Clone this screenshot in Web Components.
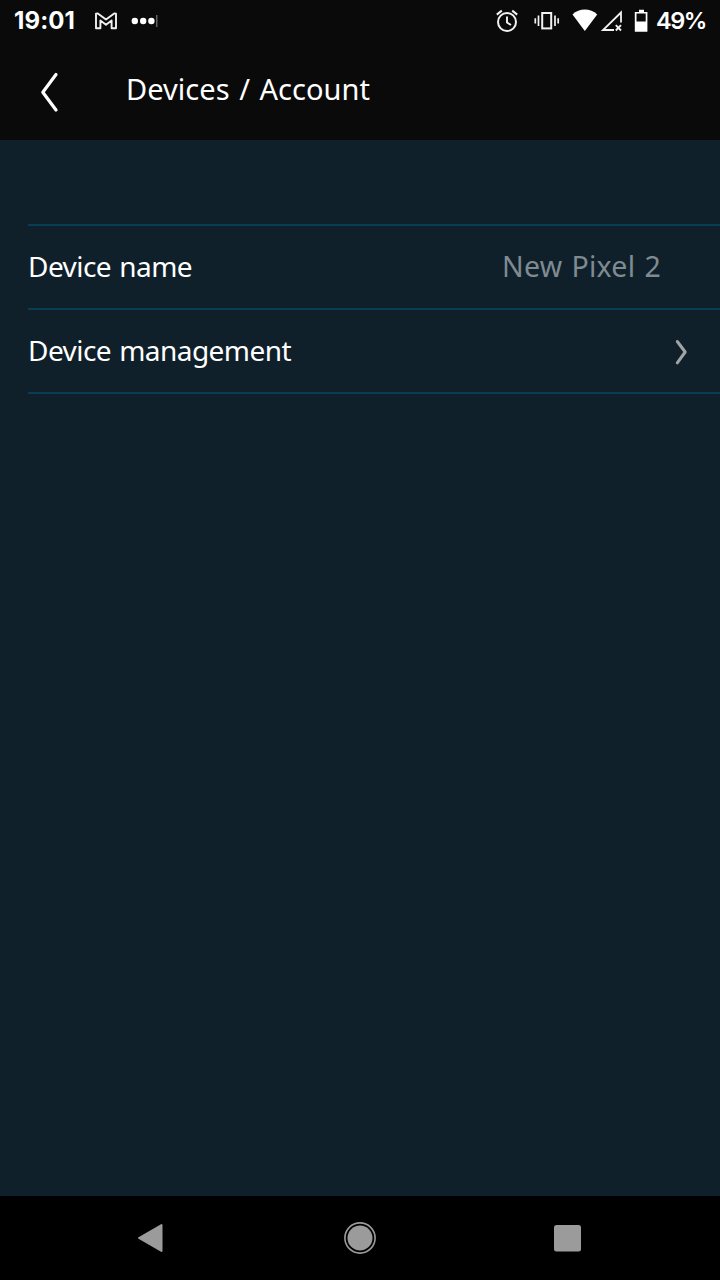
<!DOCTYPE html>
<html lang="en">
<head>
<meta charset="utf-8">
<title>Devices / Account</title>
<style>
html, body { margin: 0; height: 100%; background: #000; overflow: hidden; }
</style>
</head>
<body>
<phone-screen>
  <status-bar slot="top"></status-bar>
  <app-header slot="top"><fit-text width="244">Devices / Account</fit-text></app-header>
  <settings-list>
    <settings-row><fit-text width="164">Device name</fit-text><fit-text slot="value" width="159">New Pixel 2</fit-text></settings-row>
    <settings-row link><fit-text width="263">Device management</fit-text></settings-row>
  </settings-list>
  <nav-bar slot="bottom"></nav-bar>
</phone-screen>
<script>
const define = (name, html, init) => {
  const template = document.createElement('template');
  template.innerHTML = html;
  customElements.define(name, class extends HTMLElement {
    constructor() {
      super();
      this.attachShadow({ mode: 'open' }).append(template.content.cloneNode(true));
    }
    connectedCallback() { if (init) init(this); }
  });
};

define('phone-screen', `
<style>
:host { display: flex; flex-direction: column; width: 720px; height: 1280px; background: #0f202a; color: #fff; font-family: "Noto Sans", sans-serif; }
main { flex: 1; padding-top: 84px; box-sizing: border-box; }
</style>
<slot name="top"></slot><main><slot></slot></main><slot name="bottom"></slot>`);

define('status-bar', `
<style>
:host { display: flex; height: 40px; background: #0a0a0a; font: 700 24px/42px Inter, sans-serif; }
fit-text { flex: none; }
.time { margin-left: 14px; }
.battery { font-weight: 600; font-size: 23.5px; }
svg { flex: none; display: block; }
</style>
<fit-text class="time" width="61">19:01</fit-text>
<svg width="581" height="40" viewBox="75 0 581 40" fill="none" stroke="#f2f2f2">
  <path d="M96 13.7v14.5h4.4V20.4l5.6 4.3 5.6-4.3v7.8h4.4V13.7l-1.8-.3-8.2 6.2-8.2-6.2z" stroke-width="1.9" stroke-linejoin="round"/>
  <g fill="#fff" stroke="none"><circle cx="134.8" cy="21" r="3.2"/><circle cx="143.2" cy="21" r="3.2"/><circle cx="151.4" cy="21" r="3.2"/></g>
  <path d="M156.8 15v12" stroke="#777" stroke-width="1.2"/>
  <circle cx="507" cy="22" r="9" stroke-width="2"/>
  <path d="M507 16.5v6l4 2.5" stroke-width="1.9"/>
  <path d="M496.8 14.6l5-4M517.2 14.6l-5-4" stroke-width="2"/>
  <rect x="542.2" y="13" width="9" height="15.4" stroke-width="2"/>
  <path d="M538.5 15.5v10.6M535.3 18.2v5.2M555 15.5v10.6M558.2 18.2v5.2" stroke-width="1.7"/>
  <path d="M584.8 31L572.5 14.6C579 7.8 590.6 7.8 597.2 14.6z" fill="#fff" stroke="none"/>
  <path d="M614 30h-11l18-17.5v10" stroke-width="1.8"/>
  <path d="M615.8 25.2l5.2 5.3M621 25.2l-5.2 5.3" stroke-width="1.9"/>
  <path d="M639 9.7h5v2.3h3.4v19.8h-12.6V12h4.200z" fill="#fff" stroke="none"/>
  <path d="M636.5 13.5h9.200v8h-9.200z" fill="#0a0a0a" stroke="none"/>
</svg>
<fit-text class="battery" width="50">49%</fit-text>`);

define('app-header', `
<style>
:host { display: flex; height: 100px; background: #0a0a0a; font-size: 29px; line-height: 98px; word-spacing: 2px; }
svg { display: block; width: 126px; height: 100px; flex: none; }
</style>
<svg viewBox="0 40 126 100" fill="none" stroke="#fff" stroke-width="3.2" stroke-linecap="round" stroke-linejoin="round"><path d="M56 74.5L42.8 92.2 56 110"/></svg>
<slot></slot>`);

define('settings-list', `
<style>
:host { display: block; margin-left: 28px; border-top: 2px solid #083e55; word-spacing: 1.5px; }
</style><slot></slot>`);

define('settings-row', `
<style>
:host { display: flex; justify-content: space-between; height: 84px; box-sizing: border-box; border-bottom: 2px solid #083e55; font-size: 28px; line-height: 81px; }
.end { display: flex; margin-right: 59px; color: #7f8b92; font-size: 28.5px; }
svg { display: none; width: 15px; height: 82px; }
:host([link]) svg { display: block; }
:host([link]) .end { margin-right: 31px; }
</style>
<slot></slot><div class="end"><slot name="value"></slot>
<svg viewBox="674 310 15 82" fill="none" stroke="#a0a4a6" stroke-width="3" stroke-linecap="round" stroke-linejoin="round"><path d="M677.3 341.5l7.9 10.5-7.9 10.8"/></svg></div>`);

define('nav-bar', `
<style>
:host { display: block; height: 84px; background: #000; }
svg { display: block; }
</style>
<svg width="720" height="84" viewBox="0 1196 720 84" fill="#9b9b9b">
  <path d="M139 1238l22.5-13v26z" stroke="#9b9b9b" stroke-width="2" stroke-linejoin="round"/>
  <circle cx="360" cy="1238" r="12.5"/>
  <circle cx="360" cy="1238" r="15.1" fill="none" stroke="#9b9b9b" stroke-width="1.6"/>
  <rect x="554" y="1225" width="27" height="26.5" rx="2.5"/>
</svg>`);

// Tracks the label so that its advance fills the requested width.
define('fit-text', `<style>:host { display: block; } span { display: inline-block; white-space: nowrap; }</style><span><slot></slot></span>`, host => {
  const width = Number(host.getAttribute('width'));
  const span = host.shadowRoot.querySelector('span');
  const natural = span.getBoundingClientRect().width;
  span.style.letterSpacing = (width - natural) / host.textContent.length + 'px';
  host.style.width = width + 'px';
});
</script>
</body>
</html>
